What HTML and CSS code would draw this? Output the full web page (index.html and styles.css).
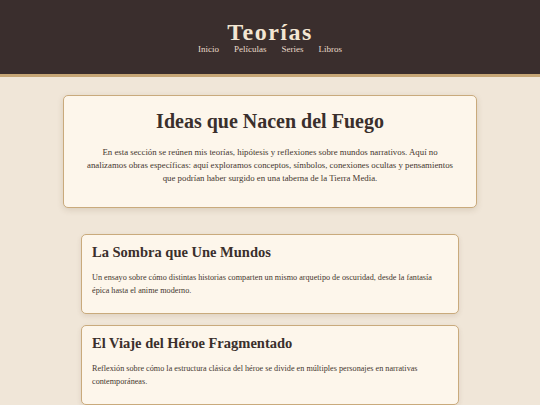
FILE: index.html
```html
<!DOCTYPE html>
<html lang="es">
<head>
<meta charset="utf-8">
<title>Teorías</title>
<link rel="stylesheet" href="styles.css">
</head>
<body>
<header class="site-header">
  <h1 class="site-title">Teorías</h1>
  <nav class="site-nav">
    <a href="#">Inicio</a>
    <a href="#">Películas</a>
    <a href="#">Series</a>
    <a href="#">Libros</a>
  </nav>
</header>
<main class="content">
  <section class="intro">
    <h2>Ideas que Nacen del Fuego</h2>
    <p>En esta sección se reúnen mis teorías, hipótesis y reflexiones sobre mundos narrativos. Aquí no analizamos obras específicas: aquí exploramos conceptos, símbolos, conexiones ocultas y pensamientos que podrían haber surgido en una taberna de la Tierra Media.</p>
  </section>
  <div class="list">
    <article class="card">
      <h3>La Sombra que Une Mundos</h3>
      <p>Un ensayo sobre cómo distintas historias comparten un mismo arquetipo de oscuridad, desde la fantasía épica hasta el anime moderno.</p>
    </article>
    <article class="card">
      <h3>El Viaje del Héroe Fragmentado</h3>
      <p>Reflexión sobre cómo la estructura clásica del héroe se divide en múltiples personajes en narrativas contemporáneas.</p>
    </article>
  </div>
</main>
</body>
</html>
```

FILE: styles.css
```css
* { box-sizing: border-box; }
html, body { margin: 0; padding: 0; }
body {
  background: #f0e6d8;
  font-family: "Liberation Serif", Georgia, serif;
  color: #3a2f2c;
}
.site-header {
  background: #3a2e2d;
  border-bottom: 3px solid #c6a676;
  height: 77px;
  padding-top: 19px;
  text-align: center;
}
.site-title {
  margin: 0;
  color: #f3e6d3;
  font-size: 24px;
  line-height: 26px;
  letter-spacing: 1.5px;
  font-weight: bold;
}
.site-nav {
  display: flex;
  justify-content: center;
  gap: 15px;
  margin-top: -2px;
}
.site-nav a {
  color: #eadccb;
  text-decoration: none;
  font-size: 9px;
  line-height: 12px;
}
.content {
  padding: 18px 0 0;
}
.intro {
  width: 414px;
  margin: 0 auto;
  background: #fdf6eb;
  border: 1.5px solid #c9aa7c;
  border-radius: 5px;
  box-shadow: 0 2px 6px rgba(90, 60, 30, 0.15);
  padding: 13px 18px 22px;
  text-align: center;
}
.intro h2 {
  margin: 0 0 13px;
  font-size: 20px;
  line-height: 24px;
  font-weight: bold;
  color: #3a2f2c;
}
.intro p {
  margin: 0;
  font-size: 8.8px;
  line-height: 13px;
  color: #45372f;
}
.list {
  width: 378px;
  margin: 26px auto 0;
  display: flex;
  flex-direction: column;
  gap: 11px;
}
.card {
  background: #fdf6eb;
  border: 1.5px solid #c9aa7c;
  border-radius: 5px;
  box-shadow: 0 2px 5px rgba(90, 60, 30, 0.12);
  padding: 8px 10px 16px;
}
.card h3 {
  margin: 0 0 10px;
  font-size: 14.5px;
  line-height: 18px;
  font-weight: bold;
  color: #3a2f2c;
}
.card p {
  margin: 0;
  font-size: 8.2px;
  line-height: 13px;
  color: #45372f;
}
```
